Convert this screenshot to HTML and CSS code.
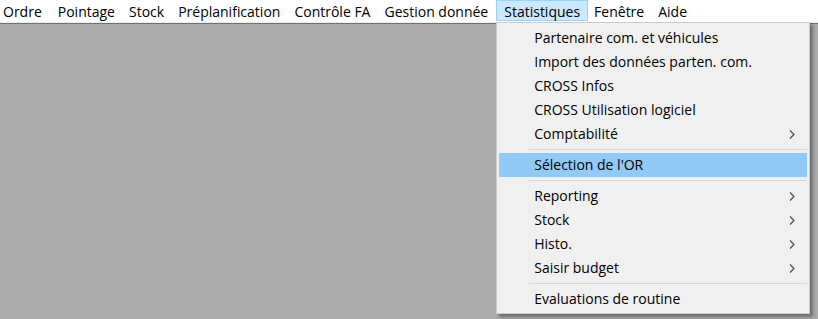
FILE: index.html
```html
<!DOCTYPE html>
<html lang="fr">
<head>
  <meta charset="UTF-8" />
  <title>Statistiques</title>
  <link rel="stylesheet" href="styles.css">
</head>
<body>
  <nav class="menubar">
    <ul class="menubar-list">
      <li class="menubar-item first">Ordre</li>
      <li class="menubar-item">Pointage</li>
      <li class="menubar-item">Stock</li>
      <li class="menubar-item">Préplanification</li>
      <li class="menubar-item">Contrôle FA</li>
      <li class="menubar-item">Gestion donnée</li>
      <li class="menubar-item open">
        Statistiques
        <ul class="dropdown">
          <li class="dropdown-item">Partenaire com. et véhicules</li>
          <li class="dropdown-item">Import des données parten. com.</li>
          <li class="dropdown-item">CROSS Infos</li>
          <li class="dropdown-item">CROSS Utilisation logiciel</li>
          <li class="dropdown-item has-sub">Comptabilité
            <svg class="chevron" width="6" height="9" viewBox="0 0 6 9"><polyline points="1,0.5 5,4.5 1,8.5" fill="none" stroke="#444" stroke-width="1.1"/></svg>
          </li>
          <li class="separator"></li>
          <li class="dropdown-item active">Sélection de l'OR</li>
          <li class="separator"></li>
          <li class="dropdown-item has-sub">Reporting
            <svg class="chevron" width="6" height="9" viewBox="0 0 6 9"><polyline points="1,0.5 5,4.5 1,8.5" fill="none" stroke="#444" stroke-width="1.1"/></svg>
          </li>
          <li class="dropdown-item has-sub">Stock
            <svg class="chevron" width="6" height="9" viewBox="0 0 6 9"><polyline points="1,0.5 5,4.5 1,8.5" fill="none" stroke="#444" stroke-width="1.1"/></svg>
          </li>
          <li class="dropdown-item has-sub">Histo.
            <svg class="chevron" width="6" height="9" viewBox="0 0 6 9"><polyline points="1,0.5 5,4.5 1,8.5" fill="none" stroke="#444" stroke-width="1.1"/></svg>
          </li>
          <li class="dropdown-item has-sub">Saisir budget
            <svg class="chevron" width="6" height="9" viewBox="0 0 6 9"><polyline points="1,0.5 5,4.5 1,8.5" fill="none" stroke="#444" stroke-width="1.1"/></svg>
          </li>
          <li class="separator"></li>
          <li class="dropdown-item">Evaluations de routine</li>
        </ul>
      </li>
      <li class="menubar-item">Fenêtre</li>
      <li class="menubar-item">Aide</li>
    </ul>
  </nav>
  <main class="workspace"></main>
</body>
</html>
```

FILE: styles.css
```css
* {
  margin: 0;
  padding: 0;
  box-sizing: border-box;
}

html,
body {
  height: 100%;
}

body {
  font-family: "Open Sans", "Noto Sans", sans-serif;
  font-size: 14px;
  color: #000;
  background-color: #ababab;
  display: flex;
  flex-direction: column;
  overflow: hidden;
}

ul {
  list-style: none;
}

.menubar {
  background-color: #fff;
  height: 23px;
  border-bottom: 1px solid #ededed;
  position: relative;
  z-index: 2;
}

.menubar-list {
  display: flex;
  height: 21px;
}

.menubar-item {
  position: relative;
  padding: 0 7px 0 5px;
  line-height: 21px;
  border: 1px solid transparent;
  white-space: nowrap;
}

.menubar-item.first {
  padding: 0 9px 0 2px;
}

.menubar-item.open {
  background-color: #cce8ff;
  border-color: #99d1ff;
  padding: 0 7px 0 7px;
}

.workspace {
  flex: 1;
  border-top: 1px solid #717171;
}

/* menu deroulant */
.dropdown {
  position: absolute;
  top: 21px;
  left: -1px;
  width: 314px;
  padding: 3px 2px 2px;
  background-color: #f0f0f0;
  border: 1px solid #cccccc;
  box-shadow: 3px 3px 3px rgba(0, 0, 0, 0.35);
  color: #000;
}

.dropdown-item {
  position: relative;
  height: 24px;
  line-height: 24px;
  padding-left: 35px;
}

.dropdown-item.active {
  background-color: #91c9f7;
}

.chevron {
  position: absolute;
  right: 12px;
  top: 8px;
}

.separator {
  height: 7px;
  margin-left: 30px;
  display: flex;
  align-items: center;
}

.separator::before {
  content: "";
  flex: 1;
  height: 1px;
  background-color: #d7d7d7;
}
```
